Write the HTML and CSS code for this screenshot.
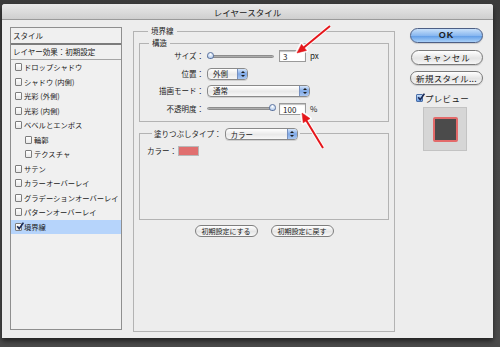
FILE: index.html
```html
<!DOCTYPE html>
<html lang="ja">
<head>
  <meta charset="UTF-8">
  <link rel="stylesheet" href="styles.css">
  <title>レイヤースタイル</title>
</head>
<body>
  <div class="window">
    <div class="titlebar">レイヤースタイル</div>
    <div class="dialog">
      <div class="style-list">
        <div class="list-head">スタイル</div>
        <div class="list-default">レイヤー効果：初期設定</div>
        <ul class="effects">
          <li><span class="check"></span>ドロップシャドウ</li>
          <li><span class="check"></span>シャドウ (内側)</li>
          <li><span class="check"></span>光彩 (外側)</li>
          <li><span class="check"></span>光彩 (内側)</li>
          <li><span class="check"></span>ベベルとエンボス</li>
          <li class="sub"><span class="check"></span>輪郭</li>
          <li class="sub"><span class="check"></span>テクスチャ</li>
          <li><span class="check"></span>サテン</li>
          <li><span class="check"></span>カラーオーバーレイ</li>
          <li><span class="check"></span>グラデーションオーバーレイ</li>
          <li><span class="check"></span>パターンオーバーレイ</li>
          <li class="selected"><span class="check checked"><svg viewBox="0 0 8 8" width="8" height="8"><path d="M1.2 4.2 L3.2 6.6 L7.4 0.6" fill="none" stroke="#1b2a55" stroke-width="1.6"/></svg></span>境界線</li>
        </ul>
      </div>

      <div class="settings">
        <fieldset class="group outer">
          <legend>境界線</legend>
          <fieldset class="group structure">
            <legend>構造</legend>
            <div class="row">
              <span class="label">サイズ：</span>
              <span class="slider"><span class="knob"></span></span>
              <span class="field">3</span><span class="unit">px</span>
            </div>
            <div class="row">
              <span class="label">位置：</span>
              <span class="popup short">外側<span class="stepper"></span></span>
            </div>
            <div class="row">
              <span class="label">描画モード：</span>
              <span class="popup long">通常<span class="stepper"></span></span>
            </div>
            <div class="row">
              <span class="label">不透明度：</span>
              <span class="slider full"><span class="knob"></span></span>
              <span class="field">100</span><span class="unit">%</span>
            </div>
          </fieldset>
          <fieldset class="group fill">
            <legend>塗りつぶしタイプ：<span class="popup type">カラー<span class="stepper"></span></span></legend>
            <div class="fill-body">
              <span>カラー：</span><span class="swatch"></span>
            </div>
          </fieldset>
          <div class="reset-buttons">
            <span class="small-btn">初期設定にする</span>
            <span class="small-btn">初期設定に戻す</span>
          </div>
        </fieldset>
      </div>

      <div class="actions">
        <span class="btn default">OK</span>
        <span class="btn cancel">キャンセル</span>
        <span class="btn new">新規スタイル...</span>
        <div class="preview-toggle">
          <span class="check checked blue"><svg viewBox="0 0 8 8" width="8" height="8"><path d="M1.2 4.2 L3.2 6.6 L7.4 0.6" fill="none" stroke="#1b2a55" stroke-width="1.6"/></svg></span>プレビュー
        </div>
        <div class="preview-box"><span class="preview-square"></span></div>
      </div>
    </div>
  </div>

  <svg class="arrows" width="500" height="347" viewBox="0 0 500 347">
    <g stroke="#fff" stroke-width="4" fill="#fff" stroke-linejoin="round" opacity="0.85">
      <line x1="330" y1="26" x2="302" y2="49"/>
      <polygon points="297,53 306.5,50.4 301.5,44.2"/>
      <line x1="323" y1="148" x2="306" y2="120"/>
      <polygon points="302,113 310,118.6 303.2,122.8"/>
    </g>
    <g stroke="#e5161b" stroke-width="2" fill="#e5161b">
      <line x1="330" y1="26" x2="302" y2="49"/>
      <polygon points="297,53 306.5,50.4 301.5,44.2" stroke-width="0.5"/>
      <line x1="323" y1="148" x2="306" y2="120"/>
      <polygon points="302,113 310,118.6 303.2,122.8" stroke-width="0.5"/>
    </g>
  </svg>
</body>
</html>
```

FILE: styles.css
```css
* {
  margin: 0;
  padding: 0;
  box-sizing: border-box;
}

body {
  width: 500px;
  height: 347px;
  overflow: hidden;
  background: linear-gradient(#3b3b3b, #484848 40%, #4a4a4a);
  font-family: "Noto Sans CJK JP", "Noto Sans", sans-serif;
  font-size: 7.5px;
  line-height: 10px;
  color: #1a1a1a;
  position: relative;
}

.window {
  margin: 4px 0 0 2px;
  width: 491px;
  height: 334px;
  background: #ededed;
  box-shadow: 0 3px 5px rgba(0, 0, 0, 0.55);
  border-radius: 3px 3px 0 0;
}

.titlebar {
  height: 16px;
  line-height: 16px;
  text-align: center;
  font-size: 8.5px;
  color: #202020;
  background: linear-gradient(#e9e9e9, #cfcfcf);
  border-bottom: 1px solid #9a9a9a;
  border-radius: 3px 3px 0 0;
}

.dialog {
  display: flex;
  align-items: flex-start;
  padding: 7px 10px 0 8px;
}

/* liste des styles */
.style-list {
  width: 112px;
  height: 303px;
  border: 1px solid #8f8f8f;
  background: #f0f0f0;
}

.list-head {
  height: 17px;
  line-height: 16px;
  padding-left: 2px;
  border-bottom: 2px solid #7c7c7c;
}

.list-default {
  height: 15px;
  line-height: 14px;
  padding-left: 2px;
  border-bottom: 1px solid #a5a5a5;
}

.effects {
  list-style: none;
}

.effects li {
  height: 14.5px;
  display: flex;
  align-items: center;
  padding-left: 4px;
  font-size: 7.3px;
  white-space: nowrap;
}

.effects li.sub {
  padding-left: 14px;
}

.effects li.selected {
  background: #b6d4fb;
}

.check {
  width: 7px;
  height: 8px;
  margin-right: 2px;
  border: 1px solid #7d7d7d;
  border-radius: 1px;
  background: linear-gradient(#fff, #e8e8e8);
  position: relative;
  flex: none;
}

.check svg {
  position: absolute;
  left: 0;
  top: -2px;
}

.check.blue {
  background: linear-gradient(#c5dcf8, #6b9ee4);
  border-color: #4b6fa8;
}

/* colonne centrale */
.settings {
  width: 262px;
  margin-left: 11px;
  margin-top: -1px;
}

.group {
  border: 1px solid #b3b3b3;
}

.group legend {
  margin-left: 8px;
  padding: 0 3px;
  line-height: 10px;
}

.outer {
  height: 306px;
  padding: 2px 5px 0;
}

.outer > legend {
  margin-left: 9px;
}

.structure {
  padding: 1px 0 5px;
}

.structure > legend {
  margin-left: 9px;
}

.row {
  height: 14px;
  display: flex;
  align-items: center;
  margin-top: 3.5px;
}

.row:first-of-type {
  margin-top: 0;
}

.label {
  width: 64px;
  text-align: right;
  margin-right: 3px;
}

.slider {
  width: 67px;
  height: 3px;
  border-radius: 2px;
  background: linear-gradient(#8a8a8a, #cfcfcf);
  border: 1px solid #8d8d8d;
  position: relative;
}

.knob {
  position: absolute;
  left: -1px;
  top: -4px;
  width: 7px;
  height: 7px;
  border-radius: 50% 50% 40% 40%;
  border: 1px solid #5d74a0;
  background: radial-gradient(circle at 50% 30%, #ffffff, #9fbde6);
}

.slider.full .knob {
  left: 61px;
}

.field {
  width: 27px;
  height: 12px;
  margin-left: 5px;
  padding-left: 3px;
  line-height: 11px;
  font-size: 8px;
  background: #fff;
  border: 1px solid #9a9a9a;
  box-shadow: inset 0 1px 1px rgba(0, 0, 0, 0.25);
}

.unit {
  margin-left: 4px;
  font-size: 8px;
}

.popup {
  height: 12px;
  display: inline-flex;
  align-items: center;
  position: relative;
  padding-left: 5px;
  border: 1px solid #8a8a8a;
  border-radius: 4px;
  background: linear-gradient(#ffffff, #e9e9e9 55%, #f7f7f7);
  box-shadow: 0 1px 0 rgba(0, 0, 0, 0.12);
  vertical-align: middle;
}

.popup.short {
  width: 41px;
}

.popup.long {
  width: 103px;
}

.popup.type {
  width: 73px;
  margin-left: 3px;
}

.stepper {
  position: absolute;
  right: 0;
  top: 0;
  bottom: 0;
  width: 10px;
  border-radius: 0 3px 3px 0;
  border-left: 1px solid #7690bf;
  background: linear-gradient(#d6e6fb, #7ea8e6 50%, #a9c7f2);
}

.stepper::before,
.stepper::after {
  content: "";
  position: absolute;
  left: 2.5px;
  border-left: 2px solid transparent;
  border-right: 2px solid transparent;
}

.stepper::before {
  top: 2px;
  border-bottom: 2px solid #1d1d1d;
}

.stepper::after {
  bottom: 2px;
  border-top: 2px solid #1d1d1d;
}

.fill {
  margin-top: 5px;
  padding: 6px 7px 0;
}

.fill > legend {
  margin-left: 5px;
  padding: 0 2px;
  line-height: 13px;
}

.fill-body {
  height: 73px;
  display: flex;
  align-items: flex-start;
  line-height: 10px;
}

.swatch {
  width: 21px;
  height: 10px;
  margin-left: 1px;
  background: #e06f6f;
  border: 1px solid #b8b8b8;
}

.reset-buttons {
  display: flex;
  justify-content: center;
  gap: 13px;
  margin-top: 5px;
}

.small-btn {
  width: 63px;
  height: 12px;
  line-height: 10px;
  text-align: center;
  font-size: 7px;
  border: 1px solid #7f7f7f;
  border-radius: 6px;
  background: linear-gradient(#ffffff, #e6e6e6 55%, #f8f8f8);
}

/* boutons de droite */
.actions {
  width: 73px;
  margin-left: 15px;
  display: flex;
  flex-direction: column;
}

.btn {
  display: block;
  height: 15px;
  line-height: 13px;
  text-align: center;
  font-size: 8.5px;
  letter-spacing: 1px;
  border: 1px solid #7a7a7a;
  border-radius: 8px;
  background: linear-gradient(#ffffff, #e4e4e4 55%, #f6f6f6);
  box-shadow: 0 1px 1px rgba(0, 0, 0, 0.15);
}

.btn.default {
  margin-top: 1px;
  font-weight: bold;
  font-size: 9px;
  font-family: "Liberation Sans", sans-serif;
  border-color: #4d5f85;
  background: linear-gradient(#c8e0fa, #8ab8f0 50%, #5d9ae6 51%, #a9d0f8);
}

.btn.cancel {
  margin-top: 7px;
  margin-left: 1px;
}

.btn.new {
  margin-top: 6px;
  height: 14px;
  letter-spacing: 0.3px;
}

.preview-toggle {
  margin-top: 7px;
  margin-left: 6px;
  height: 12px;
  display: flex;
  align-items: center;
  font-size: 8.5px;
  letter-spacing: 0.3px;
}

.preview-box {
  width: 44px;
  height: 44px;
  margin-top: 3px;
  margin-left: 13px;
  background: #d6d6d6;
  border: 1px solid #c3c3c3;
  display: flex;
  align-items: center;
  justify-content: center;
}

.preview-square {
  width: 25px;
  height: 25px;
  background: #4b4b4b;
  border: 2px solid #e36a6a;
  border-radius: 2px;
}

.arrows {
  position: absolute;
  left: 0;
  top: 0;
  pointer-events: none;
}
```
